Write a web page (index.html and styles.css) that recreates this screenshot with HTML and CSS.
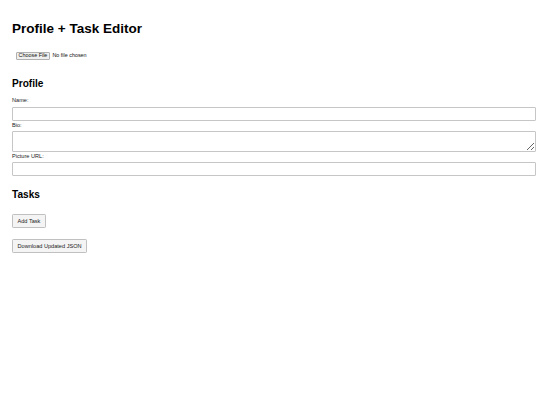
FILE: index.html
```html
<!DOCTYPE html>
<html lang="en">
<head>
<meta charset="utf-8">
<title>Profile + Task Editor</title>
<link rel="stylesheet" href="styles.css">
</head>
<body>
  <h1 class="title">Profile + Task Editor</h1>
  <div class="loader">
    <input type="file" class="file-input" accept=".json">
  </div>
  <section class="profile">
    <h2 class="section-title">Profile</h2>
    <label class="field-label" for="name">Name:</label>
    <input class="field" type="text" id="name">
    <label class="field-label" for="bio">Bio:</label>
    <textarea class="field field-area" id="bio" rows="2"></textarea>
    <label class="field-label" for="pic">Picture URL:</label>
    <input class="field" type="text" id="pic">
  </section>
  <section class="tasks">
    <h2 class="section-title">Tasks</h2>
    <div class="task-list"></div>
    <button class="btn" type="button">Add Task</button>
  </section>
  <div class="actions">
    <button class="btn" type="button">Download Updated JSON</button>
  </div>
</body>
</html>
```

FILE: styles.css
```css
html, body {
  margin: 0;
  background: #fff;
}

body {
  padding: 12px;
  font-family: "Liberation Sans", Arial, sans-serif;
  font-size: 6px;
  color: #000;
}

.title {
  font-size: 13.5px;
  line-height: 15.5px;
  font-weight: bold;
  margin: 9px 0;
}

.loader {
  padding: 6.2px 4px 10px;
}

.file-input {
  display: block;
  font-family: "Liberation Sans", Arial, sans-serif;
  font-size: 5.4px;
  line-height: 5.5px;
  color: #111;
}

.file-input::file-selector-button {
  font-family: "Liberation Sans", Arial, sans-serif;
  font-size: 5.4px;
  line-height: 5.5px;
  padding: 0.4px 1.6px;
  margin: 0 2.5px 0 0;
  border: 1px solid #b0b0b0;
  border-radius: 1px;
  background: #efefef;
  color: #111;
}

.section-title {
  font-size: 10.1px;
  line-height: 11.6px;
  font-weight: bold;
  margin: 8.4px 0 7px;
}

.field-label {
  display: block;
  font-size: 5.6px;
  line-height: 6.4px;
  margin: 1px 0 3.2px;
  color: #222;
}

.field {
  display: block;
  width: 100%;
  padding: 3px;
  border: 1px solid #c6c6c6;
  border-radius: 1px;
  font-family: "Liberation Sans", Arial, sans-serif;
  font-size: 5.6px;
  line-height: 6.5px;
  background: #fff;
  margin: 0;
}

.field-area {
  height: 12.7px;
  resize: vertical;
}

.tasks {
  padding-top: 4.2px;
}

.task-list {
  min-height: 6.6px;
}

.btn {
  display: block;
  font-family: "Liberation Sans", Arial, sans-serif;
  font-size: 5.6px;
  line-height: 6.2px;
  padding: 2.9px 4.5px;
  margin: 0;
  background: #f4f4f4;
  border: 1px solid #c0c0c0;
  border-radius: 1.2px;
  color: #222;
}

.actions {
  margin-top: 10.5px;
}
```
